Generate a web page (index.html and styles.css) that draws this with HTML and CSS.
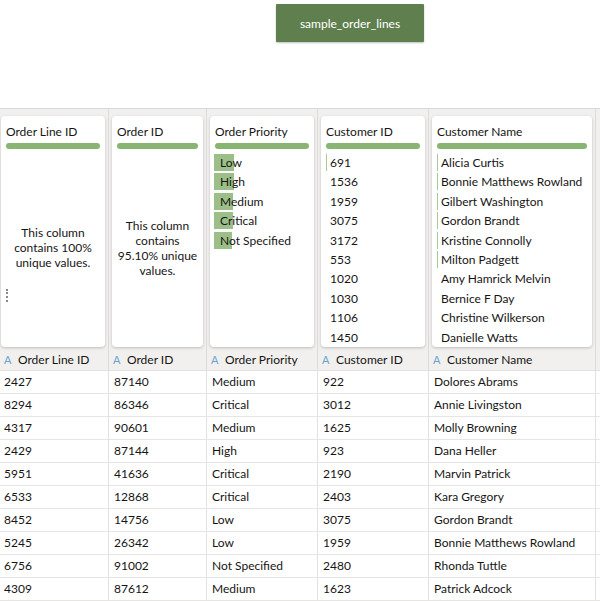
FILE: index.html
```html
<!DOCTYPE html>
<html>
<head>
<meta charset="utf-8">
<link rel="stylesheet" href="styles.css">
</head>
<body>
<div class="top">
  <div class="node">sample_order_lines</div>
</div>
<div class="grid profile">
  <div class="cell">
    <div class="card">
      <div class="ctitle">Order Line ID</div>
      <div class="gbar"></div>
      <div class="cbody msg m1">This column contains 100% unique values.</div>
      <div class="grip"></div>
    </div>
  </div>
  <div class="cell">
    <div class="card">
      <div class="ctitle">Order ID</div>
      <div class="gbar"></div>
      <div class="cbody msg m2">This column contains 95.10% unique values.</div>
    </div>
  </div>
  <div class="cell">
    <div class="card">
      <div class="ctitle">Order Priority</div>
      <div class="gbar"></div>
      <div class="list">
        <div class="item"><span class="hbar" style="width:20px"></span><span class="txt">Low</span></div>
        <div class="item"><span class="hbar" style="width:20px"></span><span class="txt">High</span></div>
        <div class="item"><span class="hbar" style="width:19px"></span><span class="txt">Medium</span></div>
        <div class="item"><span class="hbar" style="width:19px"></span><span class="txt">Critical</span></div>
        <div class="item"><span class="hbar" style="width:18px"></span><span class="txt">Not Specified</span></div>
      </div>
    </div>
  </div>
  <div class="cell">
    <div class="card">
      <div class="ctitle">Customer ID</div>
      <div class="gbar"></div>
      <div class="list">
        <div class="item"><span class="vbar"></span>691</div>
        <div class="item">1536</div>
        <div class="item">1959</div>
        <div class="item">3075</div>
        <div class="item">3172</div>
        <div class="item">553</div>
        <div class="item">1020</div>
        <div class="item">1030</div>
        <div class="item">1106</div>
        <div class="item">1450</div>
      </div>
    </div>
  </div>
  <div class="cell">
    <div class="card">
      <div class="ctitle">Customer Name</div>
      <div class="gbar"></div>
      <div class="list">
        <div class="item"><span class="vbar"></span>Alicia Curtis</div>
        <div class="item"><span class="vbar"></span>Bonnie Matthews Rowland</div>
        <div class="item"><span class="vbar"></span>Gilbert Washington</div>
        <div class="item"><span class="vbar"></span>Gordon Brandt</div>
        <div class="item"><span class="vbar"></span>Kristine Connolly</div>
        <div class="item"><span class="vbar"></span>Milton Padgett</div>
        <div class="item">Amy Hamrick Melvin</div>
        <div class="item">Bernice F Day</div>
        <div class="item">Christine Wilkerson</div>
        <div class="item">Danielle Watts</div>
      </div>
    </div>
  </div>
  <div class="cell last"></div>
</div>
<div class="grid head">
  <div class="hc"><span class="ai">A</span>Order Line ID</div>
  <div class="hc"><span class="ai">A</span>Order ID</div>
  <div class="hc"><span class="ai">A</span>Order Priority</div>
  <div class="hc"><span class="ai">A</span>Customer ID</div>
  <div class="hc"><span class="ai">A</span>Customer Name</div>
  <div class="hc last"></div>
</div>
<div class="grid row"><div>2427</div><div>87140</div><div>Medium</div><div>922</div><div>Dolores Abrams</div><div class="last"></div></div>
<div class="grid row"><div>8294</div><div>86346</div><div>Critical</div><div>3012</div><div>Annie Livingston</div><div class="last"></div></div>
<div class="grid row"><div>4317</div><div>90601</div><div>Medium</div><div>1625</div><div>Molly Browning</div><div class="last"></div></div>
<div class="grid row"><div>2429</div><div>87144</div><div>High</div><div>923</div><div>Dana Heller</div><div class="last"></div></div>
<div class="grid row"><div>5951</div><div>41636</div><div>Critical</div><div>2190</div><div>Marvin Patrick</div><div class="last"></div></div>
<div class="grid row"><div>6533</div><div>12868</div><div>Critical</div><div>2403</div><div>Kara Gregory</div><div class="last"></div></div>
<div class="grid row"><div>8452</div><div>14756</div><div>Low</div><div>3075</div><div>Gordon Brandt</div><div class="last"></div></div>
<div class="grid row"><div>5245</div><div>26342</div><div>Low</div><div>1959</div><div>Bonnie Matthews Rowland</div><div class="last"></div></div>
<div class="grid row"><div>6756</div><div>91002</div><div>Not Specified</div><div>2480</div><div>Rhonda Tuttle</div><div class="last"></div></div>
<div class="grid row"><div>4309</div><div>87612</div><div>Medium</div><div>1623</div><div>Patrick Adcock</div><div class="last"></div></div>
</body>
</html>
```

FILE: styles.css
```css
html, body {
  margin: 0;
  padding: 0;
  background: #ffffff;
  font-family: Lato, "Noto Sans", sans-serif;
  font-size: 12px;
  color: #161513;
  overflow: hidden;
}

.top {
  height: 109px;
  border-bottom: 1px solid #d9d8d6;
  display: flex;
  justify-content: center;
  align-items: flex-start;
  padding-left: 100px;
  box-sizing: border-box;
}

.node {
  margin-top: 4px;
  width: 148px;
  height: 38px;
  background: #5f7f4e;
  color: #ffffff;
  font-size: 12px;
  display: flex;
  align-items: center;
  justify-content: center;
  box-shadow: 0 1px 2px rgba(0,0,0,0.25);
  border-radius: 1px;
}

.grid {
  display: grid;
  grid-template-columns: 109px 98px 111px 111px 167px 1fr;
}

.grid > div {
  border-right: 1px solid #dcdbd9;
  box-sizing: border-box;
}

.grid > div.last {
  border-right: none;
}

.profile {
  background: #f1f0ee;
  height: 239px;
}

.cell {
  padding: 7px 3px 3px 3px;
  display: flex;
}

.profile .cell:first-child {
  padding-left: 1px;
}

.card {
  position: relative;
  flex: 1;
  background: #ffffff;
  border-radius: 4px;
  box-shadow: 0 1px 3px rgba(0,0,0,0.22);
  display: flex;
  flex-direction: column;
  padding: 8px 5px 0 5px;
  box-sizing: border-box;
  overflow: hidden;
}

.ctitle {
  line-height: 15px;
  white-space: nowrap;
}

.gbar {
  margin-top: 4px;
  height: 6px;
  border-radius: 3px;
  background: #88b571;
}

.cbody.msg {
  flex: 1;
  display: flex;
  align-items: center;
  justify-content: center;
  text-align: center;
  line-height: 15px;
}

.m1 {
  padding: 0 4px;
}

.m2 {
  padding: 0;
}

.grip {
  position: absolute;
  left: 5px;
  top: 173px;
  width: 1px;
  height: 13px;
  border-left: 2px dotted #8a8a8a;
}

.list {
  margin-top: 4px;
  display: flex;
  flex-direction: column;
}

.item {
  position: relative;
  height: 19.4px;
  line-height: 19.4px;
  padding-left: 4px;
  white-space: nowrap;
}

.txt {
  position: relative;
  padding-left: 1px;
}

.hbar {
  position: absolute;
  left: -1px;
  top: 1px;
  height: 17px;
  background: #9cbf89;
}

.vbar {
  position: absolute;
  left: 0;
  top: 1px;
  width: 1px;
  height: 17px;
  background: #a6c996;
}

.head {
  background: #f1f0ee;
  height: 22px;
  border-bottom: 1px solid #e3e2e0;
}

.hc {
  display: flex;
  align-items: center;
  padding-left: 4px;
  white-space: nowrap;
}

.ai {
  color: #6aa6cf;
  width: 14px;
  font-size: 11px;
}

.row {
  height: 23px;
  background: #ffffff;
  border-bottom: 1px solid #e6e5e3;
  box-sizing: border-box;
}

.row > div {
  padding-left: 5px;
  line-height: 22px;
  white-space: nowrap;
  border-right-color: #e3e2e0;
}

.row > div:first-child {
  padding-left: 4px;
}
```
